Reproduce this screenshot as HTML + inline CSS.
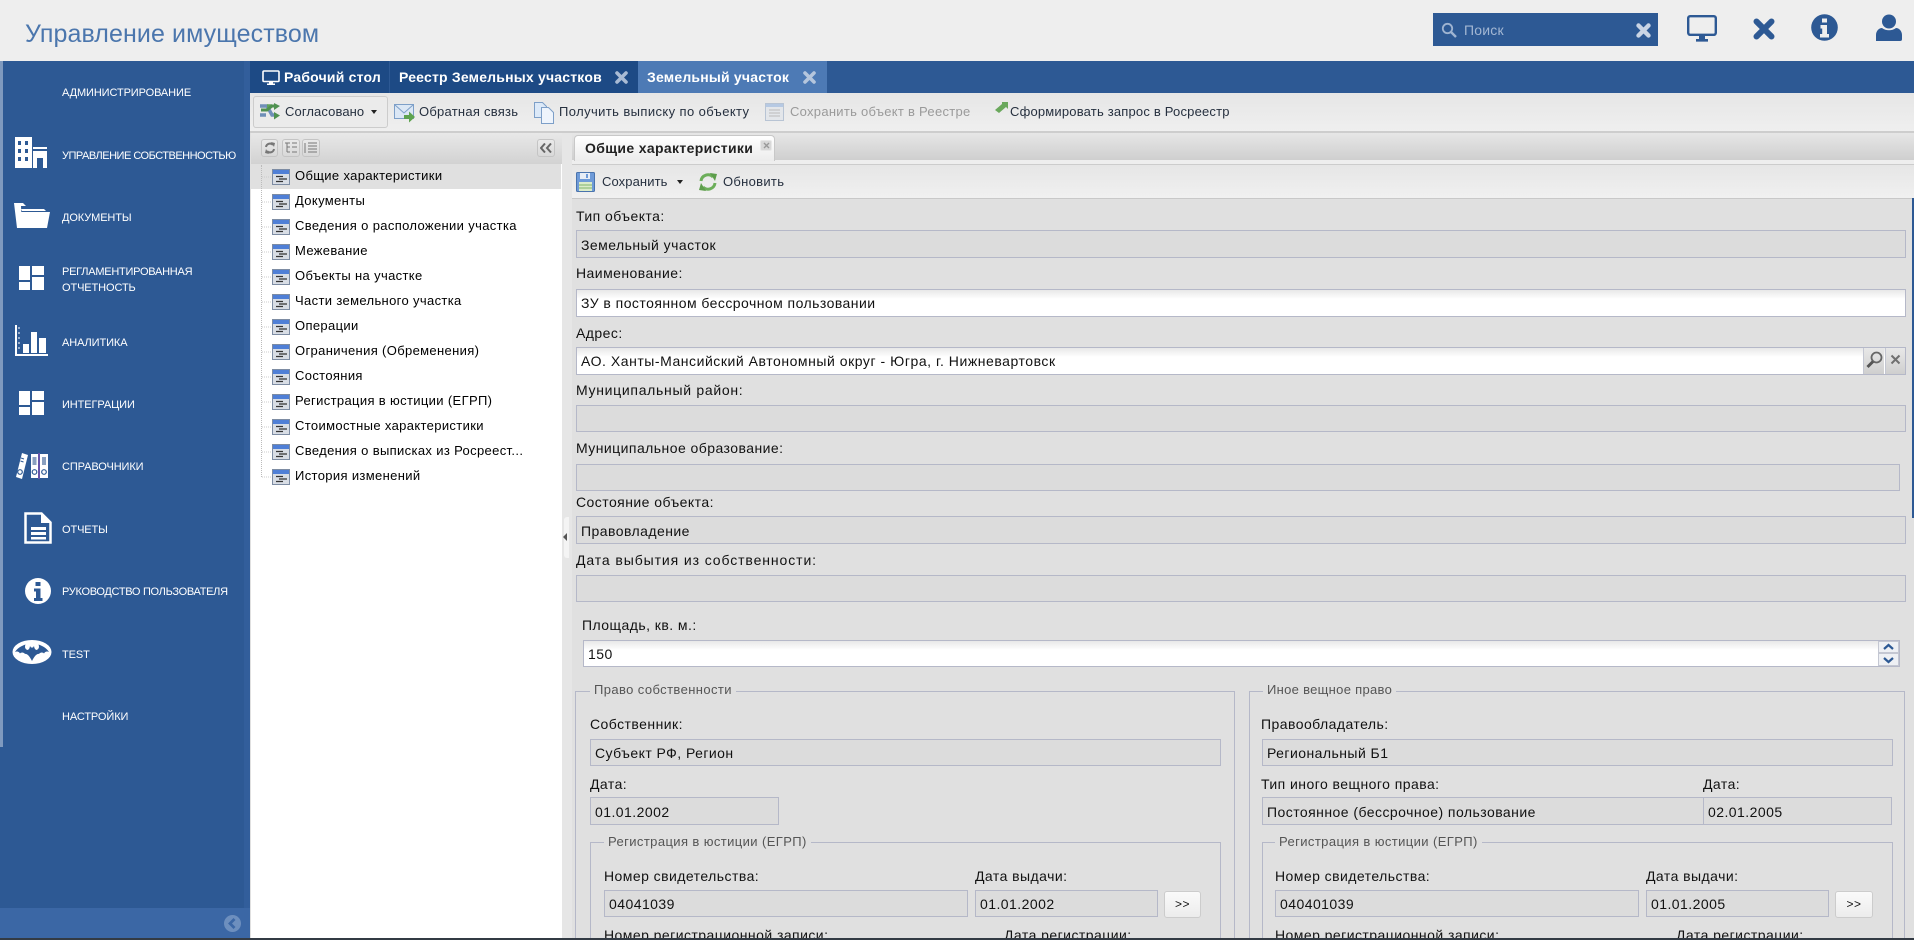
<!DOCTYPE html>
<html lang="ru"><head><meta charset="utf-8"><title>Управление имуществом</title>
<style>
html,body{margin:0;padding:0;width:1914px;height:940px;overflow:hidden;background:#fff}
body{position:relative;font-family:"Liberation Sans","DejaVu Sans",sans-serif;font-size:14px;color:#111}
div,span,svg{position:absolute;box-sizing:border-box}
.t{white-space:nowrap;line-height:16px;height:16px;letter-spacing:.45px}
.f{background:#dcdcdc;border:1px solid #b5b8c8}
.i{background:#fff linear-gradient(#e8e8e8,#fff 9px);border:1px solid #b5b8c8}
.n{color:#fff;font-size:11px;left:62px;letter-spacing:-.1px}
.r{font-size:13px;left:295px;color:#000;letter-spacing:.35px}
.b{font-weight:bold;font-size:14px;color:#fff;letter-spacing:.2px}
.m{font-size:13px;color:#26303f;letter-spacing:.25px}
.l{border:1px solid #b5b8c8}
.lg{background:#e0e0e0;padding:0 4px;color:#555;font-size:13px;letter-spacing:.4px}
.tb{background:linear-gradient(#eaeaea,#d8d8d8);border:1px solid #c4c4c4;border-radius:3px}
</style></head><body>
<svg width="0" height="0" style="position:absolute"><defs>
<symbol id="ti" viewBox="0 0 18 16"><rect x=".5" y=".5" width="17" height="15" fill="#d8dde5" stroke="#7d8ca3"/><rect x="1" y="1" width="16" height="4" fill="#4f7fd6"/><path d="M4 7.5h7M7 10h8M4 12.5h7" stroke="#333" stroke-width="1.2"/></symbol>
<symbol id="gr" viewBox="0 0 25 24"><path d="M0 0h11v14H0zM0 16h11v8H0zM13 0h12v9H13zM13 11h12v13H13z" fill="#fff"/></symbol>
</defs></svg>

<!-- top bar -->
<div style="left:0;top:0;width:1914px;height:61px;background:#eee"></div>
<div class="t" style="left:25px;top:19px;height:30px;line-height:30px;font-size:25px;color:#4b76ad;letter-spacing:.1px">Управление имуществом</div>
<div style="left:1433px;top:13px;width:225px;height:33px;background:#2d5994"></div>
<svg style="left:1441px;top:22px" width="16" height="16" viewBox="0 0 16 16"><circle cx="6.5" cy="6.5" r="4.7" fill="none" stroke="#9fb4d1" stroke-width="1.8"/><path d="M10 10l5 5" stroke="#9fb4d1" stroke-width="2.4"/></svg>
<div class="t" style="left:1464px;top:22px;font-size:14px;color:#a3b7d3;letter-spacing:.2px">Поиск</div>
<svg style="left:1636px;top:23px" width="15" height="15" viewBox="0 0 15 15"><path d="M2.5 2.5l10 10M12.5 2.5l-10 10" stroke="#c9d4e4" stroke-width="4.4" stroke-linecap="round"/></svg>
<svg style="left:1687px;top:15px" width="30" height="27" viewBox="0 0 30 27"><rect x="1.2" y="1.2" width="27.6" height="18.6" rx="2" fill="none" stroke="#2d5994" stroke-width="2.4"/><path d="M12 21h6v3h-6zM9 24h12v2.6H9z" fill="#2d5994"/></svg>
<svg style="left:1753px;top:18px" width="22" height="22" viewBox="0 0 22 22"><path d="M3.5 3.5l15 15M18.500 3.500l-15 15" stroke="#2d5994" stroke-width="6" stroke-linecap="round"/></svg>
<svg style="left:1811px;top:14px" width="27" height="27" viewBox="0 0 27 27"><circle cx="13.500" cy="13.500" r="13.300" fill="#2d5994"/><path d="M11 4.500h5v4h-5zM9.500 11h6.500v9h2v3.500H9v-3.500h2.200v-5.500H9.500z" fill="#eee"/></svg>
<svg style="left:1876px;top:14px" width="26" height="27" viewBox="0 0 26 27"><circle cx="13" cy="7.500" r="7" fill="#2d5994"/><path d="M0 27v-6c0-4 3-7 6-7 2 1.500 4.500 2.300 7 2.300s5-.8 7-2.300c3 0 6 3 6 7v4c0 1.500-.7 2-2 2z" fill="#2d5994"/></svg>

<!-- sidebar -->
<div style="left:0;top:61px;width:250px;height:879px;background:#2d5994"></div>
<div style="left:244px;top:61px;width:6px;height:847px;background:#325e9b"></div>
<div style="left:0;top:61px;width:3px;height:686px;background:#7f9abf"></div>
<div style="left:0;top:908px;width:250px;height:30px;background:#3b67a5"></div>
<svg style="left:224px;top:915px" width="17" height="17" viewBox="0 0 17 17"><circle cx="8.500" cy="8.500" r="8.500" fill="#6d8fbe"/><path d="M10.500 4L6 8.500l4.500 4.500" fill="none" stroke="#3b67a5" stroke-width="2.800"/></svg>

<div class="t n" style="top:85px">АДМИНИСТРИРОВАНИЕ</div>
<div class="t n" style="top:148px;letter-spacing:-.5px">УПРАВЛЕНИЕ СОБСТВЕННОСТЬЮ</div>
<div class="t n" style="top:210px">ДОКУМЕНТЫ</div>
<div class="t n" style="top:264px;letter-spacing:-.25px">РЕГЛАМЕНТИРОВАННАЯ</div>
<div class="t n" style="top:280px">ОТЧЕТНОСТЬ</div>
<div class="t n" style="top:335px">АНАЛИТИКА</div>
<div class="t n" style="top:397px">ИНТЕГРАЦИИ</div>
<div class="t n" style="top:459px">СПРАВОЧНИКИ</div>
<div class="t n" style="top:522px">ОТЧЕТЫ</div>
<div class="t n" style="top:584px;letter-spacing:-.3px">РУКОВОДСТВО ПОЛЬЗОВАТЕЛЯ</div>
<div class="t n" style="top:647px">TEST</div>
<div class="t n" style="top:709px">НАСТРОЙКИ</div>

<svg style="left:15px;top:137px" width="33" height="32" viewBox="0 0 33 32"><path fill-rule="evenodd" d="M0 0h17v31H0zM3 4v4h3V4zM10 4v4h3V4zM3 12v4h3v-4zM10 12v4h3v-4zM3 20v4h3v-4zM10 20v4h3v-4z" fill="#fff"/><path d="M18 10h14v2H18zM18 14h14v17h-4V21h-6v10h-4z" fill="#fff"/></svg>
<svg style="left:14px;top:203px" width="36" height="26" viewBox="0 0 36 26"><path d="M0 0h9l3 3h-5l1 22H3z" fill="#fff"/><path d="M7 6h23l2 2H8zM7 9h29l-3 16H6z" fill="#fff"/></svg>
<svg style="left:19px;top:266px" width="25" height="24"><use href="#gr"/></svg>
<svg style="left:15px;top:325px" width="33" height="32" viewBox="0 0 33 32"><path d="M0 0h2v29h31v2H0z" fill="#fff"/><path d="M3 3h2M3 8h2M3 13h2M3 18h2M3 23h2" stroke="#fff"/><path d="M8 19h6v9H8zM16 7h6v21h-6zM24 13h7v15h-7z" fill="#fff"/></svg>
<svg style="left:19px;top:391px" width="25" height="24"><use href="#gr"/></svg>
<svg style="left:16px;top:453px" width="32" height="26" viewBox="0 0 32 26"><path d="M6 0l6 2-6 24-6-2z" fill="#fff"/><path d="M15 1h7v24h-7zM24 1h8v24h-8z" fill="#fff"/><path d="M23 0v26" stroke="#a04fc0"/><rect x="16.500" y="4" width="4" height="8" fill="#8aa0c0"/><rect x="26" y="4" width="4" height="8" fill="#8aa0c0"/><g fill="none" stroke="#2d5994" stroke-width="1.200"><circle cx="18.500" cy="19" r="2.300"/><circle cx="28" cy="19" r="2.300"/><circle cx="4" cy="19" r="2.300"/></g><path d="M5 5l3 1M4.500 8l3 1" stroke="#2d5994"/></svg>
<svg style="left:24px;top:512px" width="28" height="32" viewBox="0 0 28 32"><path d="M1.500 1.500h16l9 9v20h-25z" fill="none" stroke="#fff" stroke-width="2.500"/><path d="M17 1l10 10H17z" fill="#fff"/><path d="M7 15h15v3H7zM7 20h15v3H7zM7 25h15v2.500H7z" fill="#fff"/></svg>
<svg style="left:25px;top:578px" width="26" height="26" viewBox="0 0 26 26"><circle cx="13" cy="13" r="13" fill="#fff"/><path d="M10.500 4h5v4h-5zM9 10.500h6.500V20h2v3H9v-3h2v-6.500H9z" fill="#2d5994"/></svg>
<svg style="left:12px;top:640px" width="40" height="24" viewBox="0 0 40 24"><ellipse cx="20" cy="12" rx="19.500" ry="12" fill="#fff"/><path d="M3 12C5 8.500 9 6 13.500 4.500c-1 2.500-.5 4.500 2 5.500 1.500-.5 2.300-2 2.500-4l1 1.500h2l1-1.500c.2 2 1 3.500 2.500 4 2.500-1 3-3 2-5.500C31 6 35 8.500 37 12c-1.500-.8-4-.8-5 1.500-1-1.200-3.500-1.500-5 .5-1.500-.5-4 1-7 7-3-6-5.500-7.500-7-7-1.500-2-4-1.700-5-.5-1-2.300-3.500-2.300-5-1.500z" fill="#2d5994"/></svg>

<!-- tab bar -->
<div style="left:250px;top:61px;width:1664px;height:32px;background:#2d5994"></div>
<div style="left:250px;top:61px;width:388px;height:32px;background:#1d4a85"></div>
<div style="left:389px;top:61px;width:1px;height:32px;background:#2d5994"></div>
<div style="left:638px;top:61px;width:189px;height:32px;background:#4d7ab5"></div>
<svg style="left:262px;top:70px" width="18" height="15" viewBox="0 0 18 15"><rect x="1" y="1" width="16" height="10.500" rx="1" fill="none" stroke="#fff" stroke-width="1.600"/><path d="M7 12h4v1.500H7zM5 13.500h8V15H5z" fill="#fff"/></svg>
<div class="t b" style="left:284px;top:69px">Рабочий стол</div>
<div class="t b" style="left:399px;top:69px">Реестр Земельных участков</div>
<svg style="left:615px;top:71px" width="13" height="13" viewBox="0 0 13 13"><path d="M2 2l9 9M11 2l-9 9" stroke="#a9bbd4" stroke-width="3.600" stroke-linecap="round"/></svg>
<div class="t b" style="left:647px;top:69px">Земельный участок</div>
<svg style="left:803px;top:71px" width="13" height="13" viewBox="0 0 13 13"><path d="M2 2l9 9M11 2l-9 9" stroke="#b5c6dd" stroke-width="3.600" stroke-linecap="round"/></svg>

<!-- toolbar -->
<div style="left:250px;top:93px;width:1664px;height:38px;background:linear-gradient(#e6e6e6,#efefef)"></div>
<div style="left:253px;top:96px;width:135px;height:32px;border:1px solid #ccc;border-radius:3px;background:#ebebeb"></div>
<svg style="left:260px;top:103px" width="20" height="18" viewBox="0 0 20 18"><path d="M0 3h7l5 9h3M0 12h6" fill="none" stroke="#6f8fb8" stroke-width="3.500"/><path d="M7 3h5" fill="none" stroke="#5fa35a" stroke-width="3.500"/><path d="M1 7h6l5-4h3" fill="none" stroke="#4f9150" stroke-width="3"/><path d="M14 0l6 3-6 4zM14 9l6 3.500-6 4z" fill="#4f9150"/></svg>
<div class="t m" style="left:285px;top:104px;letter-spacing:.1px">Согласовано</div>
<div style="left:371px;top:110px;border:3.500px solid transparent;border-top:4px solid #222;border-bottom:0"></div>
<svg style="left:394px;top:103px" width="21" height="20" viewBox="0 0 21 20"><rect x=".5" y="1.500" width="19" height="14" fill="#dbe7f5" stroke="#7d9fc8"/><path d="M1 2l9 8 9-8" fill="none" stroke="#7d9fc8"/><path d="M10 12h5V8.500l6 5.500-6 5.500V16h-5z" fill="#5da34f"/></svg>
<div class="t m" style="left:419px;top:104px">Обратная связь</div>
<svg style="left:534px;top:102px" width="20" height="22" viewBox="0 0 20 22"><path d="M.5.500h8l4 4v11H.5z" fill="#dce9f8" stroke="#7d9fc8"/><path d="M7.500 5.500h7l5 5v11h-12z" fill="#eef4fc" stroke="#7d9fc8"/></svg>
<div class="t m" style="left:559px;top:104px;letter-spacing:.4px">Получить выписку по объекту</div>
<svg style="left:765px;top:103px" width="19" height="18" viewBox="0 0 19 18"><rect x=".5" y=".5" width="18" height="17" fill="#e3e6ea" stroke="#b8c4d4"/><rect x="1" y="1" width="17" height="3" fill="#b6c9e3"/><path d="M4 7h11M4 10h11M4 13h11" stroke="#bbb"/></svg>
<div class="t m" style="left:790px;top:104px;color:#9a9a9a;letter-spacing:.28px">Сохранить объект в Реестре</div>
<svg style="left:994px;top:102px" width="14" height="11" viewBox="0 0 14 11"><path d="M8 0h6v7l-2-2-7 6-4-3 7-6z" fill="#6aa85c"/></svg>
<div class="t m" style="left:1010px;top:104px;letter-spacing:.19px">Сформировать запрос в Росреестр</div>

<!-- panels background -->
<div style="left:250px;top:131px;width:1664px;height:807px;background:#e0e0e0"></div>
<div style="left:250px;top:131px;width:1664px;height:2px;background:#cdcdcd"></div>

<!-- tree -->
<div style="left:251px;top:133px;width:311px;height:31px;background:linear-gradient(#e8e8e8,#d2d2d2)"></div>
<div style="left:251px;top:164px;width:311px;height:774px;background:#fff"></div>
<div style="left:251px;top:164px;width:310px;height:25px;background:#e0e0e0"></div>
<div class="tb" style="left:261px;top:139px;width:17px;height:18px"></div>
<div class="tb" style="left:282px;top:139px;width:18px;height:18px"></div>
<div class="tb" style="left:302px;top:139px;width:18px;height:18px"></div>
<div class="tb" style="left:537px;top:139px;width:18px;height:18px"></div>
<svg style="left:264px;top:142px" width="12" height="12" viewBox="0 0 12 12"><path d="M2 5a4 4 0 0 1 7-2M10 7a4 4 0 0 1-7 2" fill="none" stroke="#777" stroke-width="2"/><path d="M7 0l4 1-1 4zM5 12l-4-1 1-4z" fill="#777"/></svg>
<svg style="left:284px;top:142px" width="14" height="12" viewBox="0 0 14 12"><path d="M1 1h5M3 1v9M3 5h3M3 10h3M8 5h5M8 10h5M8 1h5" fill="none" stroke="#777"/></svg>
<svg style="left:304px;top:142px" width="14" height="12" viewBox="0 0 14 12"><path d="M1 1v10M4 1h9M4 4h9M4 7h9M4 10h9" fill="none" stroke="#777"/></svg>
<svg style="left:540px;top:143px" width="12" height="10" viewBox="0 0 12 10"><path d="M5 0.500L1 5l4 4.500M11 0.500L7 5l4 4.500" fill="none" stroke="#666" stroke-width="2"/></svg>

<div style="left:261px;top:165px;height:312px;width:0;border-left:1px dotted #bbb"></div>
<svg style="left:262px;top:164px" width="10" height="320" viewBox="0 0 10 320"><path d="M0 13h9M0 38h9M0 63h9M0 88h9M0 113h9M0 138h9M0 163h9M0 188h9M0 213h9M0 238h9M0 263h9M0 288h9M0 313h9" stroke="#ccc" stroke-dasharray="1 1"/></svg>
<svg style="left:272px;top:169px" width="18" height="16"><use href="#ti"/></svg>
<svg style="left:272px;top:194px" width="18" height="16"><use href="#ti"/></svg>
<svg style="left:272px;top:219px" width="18" height="16"><use href="#ti"/></svg>
<svg style="left:272px;top:244px" width="18" height="16"><use href="#ti"/></svg>
<svg style="left:272px;top:269px" width="18" height="16"><use href="#ti"/></svg>
<svg style="left:272px;top:294px" width="18" height="16"><use href="#ti"/></svg>
<svg style="left:272px;top:319px" width="18" height="16"><use href="#ti"/></svg>
<svg style="left:272px;top:344px" width="18" height="16"><use href="#ti"/></svg>
<svg style="left:272px;top:369px" width="18" height="16"><use href="#ti"/></svg>
<svg style="left:272px;top:394px" width="18" height="16"><use href="#ti"/></svg>
<svg style="left:272px;top:419px" width="18" height="16"><use href="#ti"/></svg>
<svg style="left:272px;top:444px" width="18" height="16"><use href="#ti"/></svg>
<svg style="left:272px;top:469px" width="18" height="16"><use href="#ti"/></svg>
<div class="t r" style="top:168px">Общие характеристики</div>
<div class="t r" style="top:193px">Документы</div>
<div class="t r" style="top:218px">Сведения о расположении участка</div>
<div class="t r" style="top:243px">Межевание</div>
<div class="t r" style="top:268px">Объекты на участке</div>
<div class="t r" style="top:293px">Части земельного участка</div>
<div class="t r" style="top:318px">Операции</div>
<div class="t r" style="top:343px">Ограничения (Обременения)</div>
<div class="t r" style="top:368px">Состояния</div>
<div class="t r" style="top:393px">Регистрация в юстиции (ЕГРП)</div>
<div class="t r" style="top:418px">Стоимостные характеристики</div>
<div class="t r" style="top:443px">Сведения о выписках из Росреест...</div>
<div class="t r" style="top:468px">История изменений</div>

<!-- splitter -->
<div style="left:562px;top:133px;width:10px;height:805px;background:#e6e6e6"></div>
<div style="left:564px;top:517px;width:5px;height:41px;background:#f4f4f4;border-radius:3px 0 0 3px"></div>
<div style="left:563px;top:533px;border:4px solid transparent;border-right:4px solid #555;border-left:0"></div>

<!-- right header -->
<div style="left:572px;top:133px;width:1342px;height:27px;background:linear-gradient(#e6e6e6,#cfcfcf)"></div>
<div style="left:572px;top:160px;width:1342px;height:5px;background:#eee;border-bottom:1px solid #ccc"></div>
<div style="left:574px;top:135px;width:201px;height:26px;background:linear-gradient(#fff,#ececec);border:1px solid #c8c8c8;border-bottom:0;border-radius:4px 4px 0 0"></div>
<div class="t" style="left:585px;top:140px;font-size:14px;font-weight:bold;color:#222;letter-spacing:.35px">Общие характеристики</div>
<div style="left:760px;top:140px;width:12px;height:11px;background:#d8d8d8;border:1px solid #e8e8e8;border-radius:2px"></div>
<svg style="left:763px;top:142px" width="7" height="7" viewBox="0 0 7 7"><path d="M1 1l5 5M6 1L1 6" stroke="#999" stroke-width="1.400"/></svg>
<div style="left:572px;top:165px;width:1342px;height:34px;background:linear-gradient(#e6e6e6,#f0f0f0);border-bottom:1px solid #c8c8c8"></div>
<svg style="left:576px;top:172px" width="19" height="20" viewBox="0 0 19 20"><rect x=".5" y=".5" width="18" height="19" rx="1" fill="#6f9bd8" stroke="#4a74ad"/><rect x="4" y="1" width="10" height="6" fill="#e8eef6"/><rect x="10" y="2" width="2" height="4" fill="#6f9bd8"/><rect x="3" y="10" width="13" height="9" fill="#dcecc9"/><path d="M3 13h13M3 16h13" stroke="#7fb36a"/></svg>
<div class="t m" style="left:602px;top:174px;letter-spacing:.1px">Сохранить</div>
<div style="left:677px;top:180px;border:3.500px solid transparent;border-top:4px solid #222;border-bottom:0"></div>
<svg style="left:698px;top:172px" width="20" height="20" viewBox="0 0 20 20"><path d="M3 9a7 7 0 0 1 12-4" fill="none" stroke="#6cae5a" stroke-width="3"/><path d="M17 11a7 7 0 0 1-12 4" fill="none" stroke="#6cae5a" stroke-width="3"/><path d="M12 1l7 1-2 7zM8 19l-7-1 2-7z" fill="#5d9e4b"/></svg>
<div class="t m" style="left:723px;top:174px;letter-spacing:.3px">Обновить</div>

<!-- form -->
<div class="t" style="left:576px;top:208px">Тип объекта:</div>
<div class="f" style="left:576px;top:230px;width:1330px;height:28px"></div>
<div class="t" style="left:581px;top:237px">Земельный участок</div>
<div class="t" style="left:576px;top:265px">Наименование:</div>
<div class="i" style="left:576px;top:289px;width:1330px;height:28px"></div>
<div class="t" style="left:581px;top:295px">ЗУ в постоянном бессрочном пользовании</div>
<div class="t" style="left:576px;top:325px">Адрес:</div>
<div class="i" style="left:576px;top:347px;width:1330px;height:28px"></div>
<div class="t" style="left:581px;top:353px;letter-spacing:.54px">АО. Ханты-Мансийский Автономный округ - Югра, г. Нижневартовск</div>
<div style="left:1863px;top:348px;width:21px;height:26px;background:linear-gradient(#e8e8e8,#cfcfcf);border-left:1px solid #c4c7d2"></div>
<div style="left:1885px;top:348px;width:20px;height:26px;background:linear-gradient(#e8e8e8,#cfcfcf);border-left:1px solid #c4c7d2"></div>
<svg style="left:1866px;top:351px" width="17" height="18" viewBox="0 0 17 18"><circle cx="10.500" cy="6.500" r="5" fill="none" stroke="#666" stroke-width="1.800"/><path d="M7 10.500L1.500 16" stroke="#555" stroke-width="3"/></svg>
<svg style="left:1890px;top:354px" width="11" height="11" viewBox="0 0 11 11"><path d="M1.500 1.500l8 8M9.500 1.500l-8 8" stroke="#707070" stroke-width="2"/></svg>
<div class="t" style="left:576px;top:382px;letter-spacing:.7px">Муниципальный район:</div>
<div class="f" style="left:576px;top:405px;width:1330px;height:27px"></div>
<div class="t" style="left:576px;top:440px">Муниципальное образование:</div>
<div class="f" style="left:576px;top:464px;width:1324px;height:27px"></div>
<div class="t" style="left:576px;top:494px">Состояние объекта:</div>
<div class="f" style="left:576px;top:516px;width:1330px;height:28px"></div>
<div class="t" style="left:581px;top:523px">Правовладение</div>
<div class="t" style="left:576px;top:552px;letter-spacing:.9px">Дата выбытия из собственности:</div>
<div class="f" style="left:576px;top:575px;width:1330px;height:27px"></div>
<div class="t" style="left:582px;top:617px">Площадь, кв. м.:</div>
<div class="i" style="left:583px;top:640px;width:1317px;height:27px"></div>
<div class="t" style="left:588px;top:646px">150</div>
<div style="left:1878px;top:641px;width:21px;height:12px;background:#eef0f4;border:1px solid #c4c7d2"></div>
<div style="left:1878px;top:653px;width:21px;height:13px;background:#eef0f4;border:1px solid #c4c7d2"></div>
<svg style="left:1883px;top:643px" width="11" height="22" viewBox="0 0 11 22"><path d="M1 6l4.500-4L10 6M1 15l4.500 4L10 15" fill="none" stroke="#2d5994" stroke-width="2.200"/></svg>

<!-- fieldset 1 -->
<div class="l" style="left:575px;top:691px;width:660px;height:260px"></div>
<div class="t lg" style="left:590px;top:682px">Право собственности</div>
<div class="t" style="left:590px;top:716px">Собственник:</div>
<div class="f" style="left:590px;top:739px;width:631px;height:27px"></div>
<div class="t" style="left:595px;top:745px">Субъект РФ, Регион</div>
<div class="t" style="left:590px;top:776px">Дата:</div>
<div class="f" style="left:590px;top:797px;width:189px;height:28px"></div>
<div class="t" style="left:595px;top:804px">01.01.2002</div>
<div class="l" style="left:590px;top:842px;width:631px;height:110px"></div>
<div class="t lg" style="left:604px;top:834px">Регистрация в юстиции (ЕГРП)</div>
<div class="t" style="left:604px;top:868px">Номер свидетельства:</div>
<div class="t" style="left:975px;top:868px">Дата выдачи:</div>
<div class="f" style="left:604px;top:890px;width:364px;height:27px"></div>
<div class="t" style="left:609px;top:896px">04041039</div>
<div class="f" style="left:975px;top:890px;width:183px;height:27px"></div>
<div class="t" style="left:980px;top:896px">01.01.2002</div>
<div class="t" style="left:1164px;top:891px;width:37px;height:27px;line-height:25px;text-align:center;font-size:12px;background:linear-gradient(#fafafa,#ececec);border:1px solid #ccc;border-radius:3px">&gt;&gt;</div>
<div class="t" style="left:604px;top:927px">Номер регистрационной записи:</div>
<div class="t" style="left:1004px;top:927px">Дата регистрации:</div>

<!-- fieldset 2 -->
<div class="l" style="left:1249px;top:691px;width:656px;height:260px"></div>
<div class="t lg" style="left:1263px;top:682px;letter-spacing:.3px">Иное вещное право</div>
<div class="t" style="left:1261px;top:716px">Правообладатель:</div>
<div class="f" style="left:1262px;top:739px;width:631px;height:27px"></div>
<div class="t" style="left:1267px;top:745px">Региональный Б1</div>
<div class="t" style="left:1261px;top:776px">Тип иного вещного права:</div>
<div class="t" style="left:1703px;top:776px">Дата:</div>
<div class="f" style="left:1262px;top:797px;width:442px;height:28px"></div>
<div class="t" style="left:1267px;top:804px">Постоянное (бессрочное) пользование</div>
<div class="f" style="left:1703px;top:797px;width:189px;height:28px"></div>
<div class="t" style="left:1708px;top:804px">02.01.2005</div>
<div class="l" style="left:1262px;top:842px;width:631px;height:110px"></div>
<div class="t lg" style="left:1275px;top:834px">Регистрация в юстиции (ЕГРП)</div>
<div class="t" style="left:1275px;top:868px">Номер свидетельства:</div>
<div class="t" style="left:1646px;top:868px">Дата выдачи:</div>
<div class="f" style="left:1275px;top:890px;width:364px;height:27px"></div>
<div class="t" style="left:1280px;top:896px">040401039</div>
<div class="f" style="left:1646px;top:890px;width:183px;height:27px"></div>
<div class="t" style="left:1651px;top:896px">01.01.2005</div>
<div class="t" style="left:1835px;top:891px;width:38px;height:27px;line-height:25px;text-align:center;font-size:12px;background:linear-gradient(#fafafa,#ececec);border:1px solid #ccc;border-radius:3px">&gt;&gt;</div>
<div class="t" style="left:1275px;top:927px">Номер регистрационной записи:</div>
<div class="t" style="left:1676px;top:927px">Дата регистрации:</div>

<!-- edges -->
<div style="left:1912px;top:198px;width:2px;height:320px;background:#2d5994"></div>
<div style="left:0;top:938px;width:1914px;height:2px;background:#333b44"></div>
</body></html>
